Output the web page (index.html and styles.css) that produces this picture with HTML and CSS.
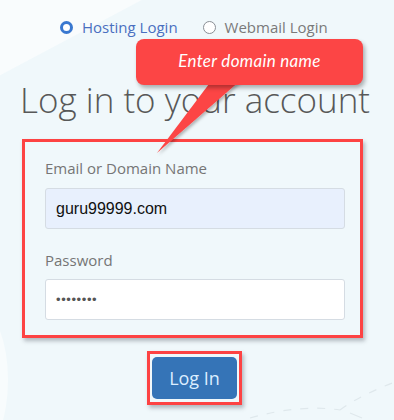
FILE: index.html
```html
<!DOCTYPE html>
<html>
<head>
<meta charset="utf-8">
<link rel="stylesheet" href="styles.css">
</head>
<body>
<div class="page">
  <svg class="deco" width="394" height="420" viewBox="0 0 394 420">
    <ellipse cx="-20" cy="380" rx="28" ry="70" fill="#f8fcfd"/>
    <path d="M250 418 Q300 404 340 410" fill="none" stroke="#dfe8ec" stroke-width="1.2" stroke-dasharray="8 9"/>
    <path d="M340 410 Q360 395 400 380" fill="none" stroke="#dfe8ec" stroke-width="1.2" stroke-dasharray="8 9"/>
    <path d="M350 413 L362 418" fill="none" stroke="#dfe8ec" stroke-width="1.2"/>
  </svg>

  <div class="radios">
    <span class="radio"><span class="dot on"></span><span class="rlabel active">Hosting Login</span></span>
    <span class="radio"><span class="dot"></span><span class="rlabel">Webmail Login</span></span>
  </div>

  <h1 class="title">Log in to your account</h1>

  <div class="formbox">
    <div class="label">Email or Domain Name</div>
    <div class="input filled">guru99999.com</div>
    <div class="label second">Password</div>
    <div class="input pw">••••••••</div>
  </div>

  <div class="btnwrap"><button class="btn">Log In</button></div>

  <div class="callout">Enter domain name</div>
  <svg class="tail" width="394" height="420" viewBox="0 0 394 420">
    <defs>
      <filter id="sh" x="-20%" y="-20%" width="140%" height="140%">
        <feDropShadow dx="1.5" dy="2" stdDeviation="1.5" flood-color="#000" flood-opacity="0.28"/>
      </filter>
    </defs>
    <polygon points="212,80 241,80 157,153" fill="#fc4545" filter="url(#sh)"/>
  </svg>
</div>
</body>
</html>
```

FILE: styles.css
```css
html, body {
  margin: 0;
  padding: 0;
  height: 100%;
}
body {
  background: linear-gradient(152deg, #f9fcfd 0, #f9fcfd 66px, #f0f8fb 67px, #f0f8fb 100%);
  font-family: "Open Sans", "Liberation Sans", sans-serif;
  overflow: hidden;
}
.page {
  position: relative;
  width: 394px;
  height: 420px;
  padding-top: 17px;
  box-sizing: border-box;
}
.deco {
  position: absolute;
  left: 0;
  top: 0;
}
.radios {
  position: relative;
  display: flex;
  justify-content: flex-start;
  gap: 25px;
  padding-left: 60px;
  height: 20px;
  line-height: 20px;
  font-size: 15px;
}
.radio {
  display: flex;
  align-items: center;
  gap: 9px;
}
.dot {
  width: 13px;
  height: 13px;
  border-radius: 50%;
  border: 1.3px solid #8a8f95;
  box-sizing: border-box;
  background: #fff;
}
.dot.on {
  border: 3.5px solid #3a78d0;
}
.rlabel {
  color: #7a7a7a;
}
.rlabel.active {
  color: #4a6fc0;
}
.title {
  position: relative;
  margin: 39px 0 0 20px;
  font-weight: 300;
  font-size: 35px;
  line-height: 48px;
  color: #585858;
  white-space: nowrap;
}
.formbox {
  position: relative;
  margin: 15px 0 0 22px;
  width: 341px;
  height: 199px;
  box-sizing: border-box;
  border: 3px solid #fd4343;
  box-shadow: 2px 3px 4px rgba(60, 70, 80, 0.35);
  padding: 16px 15px 0 20px;
}
.label {
  font-size: 15px;
  line-height: 20px;
  color: #757575;
}
.label.second {
  margin-top: 21px;
}
.input {
  margin-top: 10px;
  height: 41px;
  box-sizing: border-box;
  border: 1px solid #d5dce3;
  border-radius: 3px;
  background: #fff;
  font-family: "Liberation Sans", Arial, sans-serif;
  font-size: 16px;
  line-height: 39px;
  padding-left: 10px;
  color: #111;
}
.input.filled {
  background: #e8f0fd;
}
.input.pw {
  margin-top: 9px;
  font-size: 13px;
  color: #555;
  letter-spacing: 0.6px;
}
.btnwrap {
  position: relative;
  margin: 13px 0 0 147px;
  width: 95px;
  height: 54px;
  box-sizing: border-box;
  border: 3px solid #fd4343;
  padding: 3px 2px;
  box-shadow: 2px 3px 4px rgba(60, 70, 80, 0.35);
}
.btn {
  display: block;
  width: 85px;
  height: 42px;
  border: none;
  border-radius: 5px;
  background: #3574b7;
  color: #dceeff;
  font-family: "Open Sans", "Liberation Sans", sans-serif;
  font-size: 18px;
  padding: 0;
}
.callout {
  position: absolute;
  left: 136px;
  top: 39px;
  width: 227px;
  height: 46px;
  border-radius: 8px;
  background: #fc4545;
  box-shadow: 2px 3px 4px rgba(0, 0, 0, 0.3);
  color: #fff;
  font-family: "Lato", sans-serif;
  font-style: italic;
  font-size: 17px;
  line-height: 44px;
  text-align: center;
  letter-spacing: 0.3px;
  z-index: 2;
}
.tail {
  position: absolute;
  left: 0;
  top: 0;
  z-index: 1;
  pointer-events: none;
}
```
